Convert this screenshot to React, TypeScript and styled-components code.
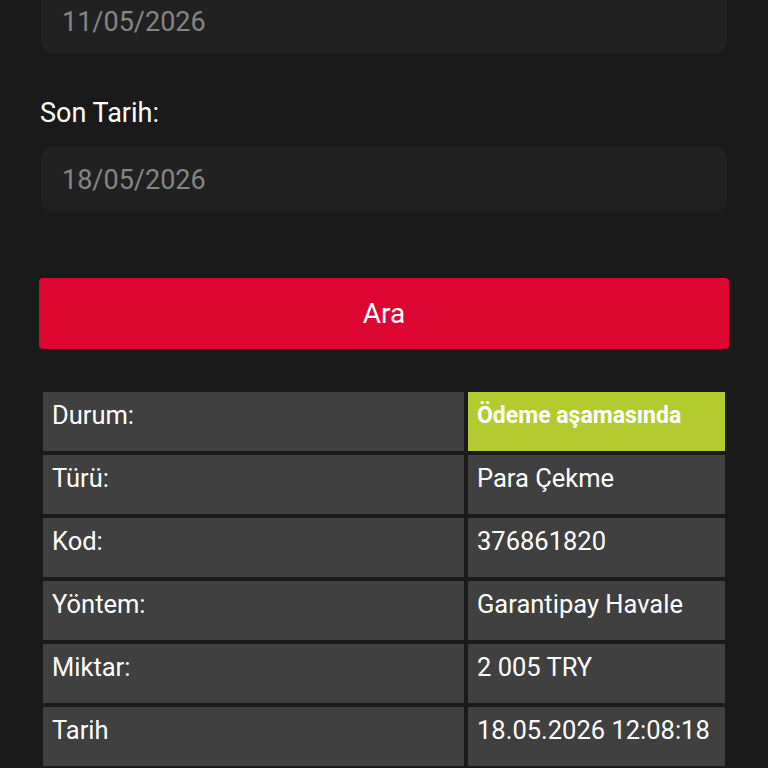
import React from 'react';
import styled, { createGlobalStyle } from 'styled-components';

const GlobalStyle = createGlobalStyle`
  html, body {
    margin: 0;
    padding: 0;
    background: #1a1a1a;
    font-family: Roboto, "Noto Sans", sans-serif;
    overflow: hidden;
  }
`;

const Page = styled.main`
  width: 768px;
  height: 768px;
  box-sizing: border-box;
  padding: 0 39px;
  background: #1a1a1a;
  overflow: hidden;
`;

const Form = styled.section`
  margin-top: -12px;
  display: flex;
  flex-direction: column;
`;

const DateField = styled.div`
  height: 66px;
  box-sizing: border-box;
  margin: 0 2px;
  border-radius: 12px;
  background: #212121;
  display: flex;
  align-items: center;
  padding: 2px 21px 0;
  font-size: 27px;
  color: #858585;
`;

const Label = styled.label`
  margin: 45px 0 19px 1px;
  font-size: 27px;
  line-height: 28px;
  color: #ffffff;
`;

const SearchButton = styled.button`
  margin-top: 66px;
  height: 71px;
  border: none;
  border-radius: 4px;
  background: #dc0631;
  color: #ffffff;
  font-family: Roboto, "Noto Sans", sans-serif;
  font-size: 28px;
`;

const Table = styled.table`
  margin-top: 39px;
  width: 100%;
  border-spacing: 4px;
  table-layout: fixed;
`;

const Cell = styled.td<{ status?: boolean }>`
  height: 59px;
  box-sizing: border-box;
  padding: ${({ status }) => (status ? '10px' : '8px')} 8px 0 9px;
  vertical-align: top;
  background: ${({ status }) => (status ? '#b4cb2f' : '#404040')};
  color: #ffffff;
  font-size: ${({ status }) => (status ? '23px' : '25.5px')};
  font-weight: ${({ status }) => (status ? 700 : 400)};
  line-height: ${({ status }) => (status ? '28px' : '30px')};
  white-space: nowrap;
`;

const rows = [
  { label: 'Durum:', value: 'Ödeme aşamasında', status: true },
  { label: 'Türü:', value: 'Para Çekme' },
  { label: 'Kod:', value: '376861820' },
  { label: 'Yöntem:', value: 'Garantipay Havale' },
  { label: 'Miktar:', value: '2 005 TRY' },
  { label: 'Tarih', value: '18.05.2026 12:08:18' },
];

function App(): JSX.Element {
  return (
    <Page>
      <GlobalStyle />
      <Form>
        <DateField>11/05/2026</DateField>
        <Label>Son Tarih:</Label>
        <DateField>18/05/2026</DateField>
        <SearchButton>Ara</SearchButton>
      </Form>
      <Table>
        <colgroup>
          <col style={{ width: '421px' }} />
          <col style={{ width: '257px' }} />
        </colgroup>
        <tbody>
          {rows.map((row) => (
            <tr key={row.label}>
              <Cell>{row.label}</Cell>
              <Cell status={row.status}>{row.value}</Cell>
            </tr>
          ))}
        </tbody>
      </Table>
    </Page>
  );
}

export default App;
